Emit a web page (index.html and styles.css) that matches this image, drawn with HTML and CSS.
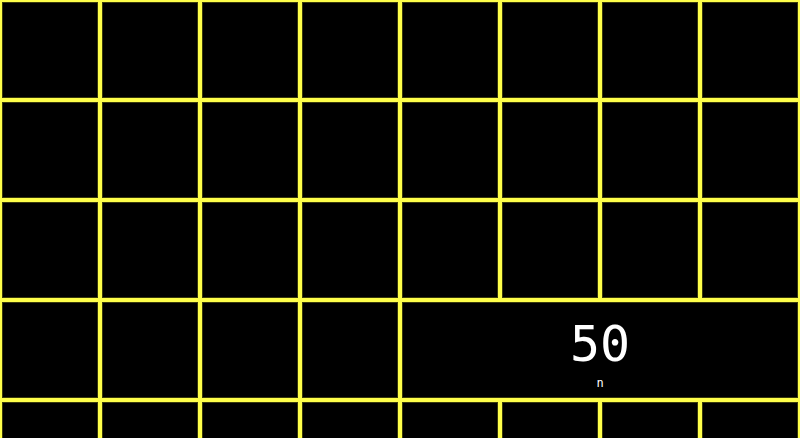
FILE: index.html
```html
<!DOCTYPE html>
<html>
<head>
<meta charset="utf-8">
<link rel="stylesheet" href="styles.css">
</head>
<body>
<div class="grid">
  <div class="cell"></div><div class="cell"></div><div class="cell"></div><div class="cell"></div>
  <div class="cell"></div><div class="cell"></div><div class="cell"></div><div class="cell"></div>
  <div class="cell"></div><div class="cell"></div><div class="cell"></div><div class="cell"></div>
  <div class="cell"></div><div class="cell"></div><div class="cell"></div><div class="cell"></div>
  <div class="cell"></div><div class="cell"></div><div class="cell"></div><div class="cell"></div>
  <div class="cell"></div><div class="cell"></div><div class="cell"></div><div class="cell"></div>
  <div class="cell"></div><div class="cell"></div><div class="cell"></div><div class="cell"></div>
  <div class="cell wide">
    <div class="value">50</div>
    <div class="label">n</div>
  </div>
  <div class="cell"></div><div class="cell"></div><div class="cell"></div><div class="cell"></div>
  <div class="cell"></div><div class="cell"></div><div class="cell"></div><div class="cell"></div>
</div>
</body>
</html>
```

FILE: styles.css
```css
html, body {
  margin: 0;
  padding: 0;
  background: #000;
  overflow: hidden;
  height: 438px;
}
.grid {
  display: grid;
  grid-template-columns: repeat(8, 100px);
  grid-auto-rows: 100px;
  width: 800px;
  height: 438px;
  overflow: hidden;
}
.cell {
  box-sizing: border-box;
  border: 2px solid #ffff4a;
  box-shadow: inset 0 0 0 1px #3a3a0c;
  background: #000;
}
.wide {
  grid-column: span 4;
  display: flex;
  flex-direction: column;
  align-items: center;
  justify-content: center;
  font-family: "DejaVu Sans Mono", monospace;
  color: #fff;
}
.value {
  font-size: 50px;
  line-height: 56px;
  margin-top: 6px;
}
.label {
  font-size: 12px;
  line-height: 14px;
  color: #fff;
  margin-top: 4px;
}
```
